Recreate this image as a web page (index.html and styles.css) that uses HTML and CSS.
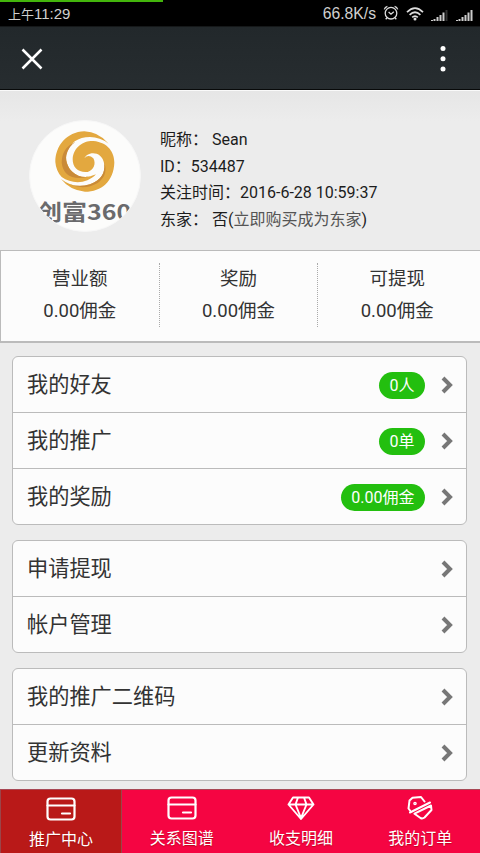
FILE: index.html
```html
<!DOCTYPE html>
<html lang="zh-CN">
<head>
<meta charset="utf-8">
<title>推广中心</title>
<link rel="stylesheet" href="styles.css">
</head>
<body>
<div class="screen">
  <div class="status">
    <i class="progress"></i>
    <span class="clock">上午<span class="time">11:29</span></span>
    <span class="speed">66.8K/s</span>
    <svg class="alarm" width="16" height="16" viewBox="0 0 16 16"><g fill="none" stroke="#ddd" stroke-width="1.3"><circle cx="8" cy="8.2" r="5.8"/><path d="M5.6 7l2.4 2.2L10.800 6.800M1.300 4.400Q2 2 4.400 1.300M11.600 1.300Q14 2 14.700 4.400M4 12.800l-1.300 1.500M12 12.800l1.300 1.500"/></g></svg>
    <svg class="wifi" width="18" height="14" viewBox="0 0 18 14"><g fill="none" stroke="#ddd" stroke-width="1.7"><path d="M1 5.200Q9-2.800 17 5.200M3.600 7.900Q9 2.600 14.400 7.900M6.200 10.400Q9 7.700 11.800 10.400"/></g><circle cx="9" cy="12" r="1.500" fill="#ddd"/></svg>
    <svg class="signal" width="17" height="12" viewBox="0 0 17 12"><path d="M0 11h2v1H0zM2.500 10h2v2h-2zM5.500 8h2v4h-2zM8.500 6h2v6h-2zM11.500 3.500h2V12h-2z" fill="#ccc"/><path d="M14.500 1h2v11h-2z" fill="#333"/></svg>
    <svg class="signal" width="17" height="12" viewBox="0 0 17 12"><path d="M0 11h2v1H0zM2.500 10h2v2h-2zM5.500 8h2v4h-2zM8.500 6h2v6h-2zM11.500 3.500h2V12h-2zM14.500 1h2v11h-2z" fill="#ccc"/></svg>
  </div>
  <header class="bar">
    <svg width="22" height="22" viewBox="0 0 22 22"><path d="M1.500 1.500l19 19M20.500 1.500l-19 19" stroke="#fff" stroke-width="2.500"/></svg>
    <svg width="6" height="28" viewBox="0 0 6 28"><g fill="#fff"><circle cx="3" cy="3.500" r="2.500"/><circle cx="3" cy="13.700" r="2.500"/><circle cx="3" cy="24" r="2.500"/></g></svg>
  </header>
  <section class="profile">
    <div class="avatar">
      <svg class="swirl" width="60" height="62" viewBox="0 0 180 186"><path d="M161 38Q130 2 88 1C35 3 1 45 1 93Q3 120 20 138C50 160 95 160 123 130Q95 143 70 134C40 122 30 90 34 72C42 35 70 18 105 18Q135 18 161 38z" fill="#e3a83f"/><path d="M62 32Q20 50 20 95C24 135 60 155 123 130Q95 143 70 134C40 122 30 90 34 72Q40 46 62 32z" fill="#c98a38"/><path d="M88 82Q100 68 115 82C124 98 116 118 98 123C70 126 53 110 53 85C55 45 90 28 115 30C160 34 178 65 178 95C176 150 140 182 90 182Q45 178 18 144Q60 176 105 160C140 148 150 125 148 100C143 70 122 64 105 68Q92 72 88 82z" fill="#e3a83f"/><path d="M105 160C140 148 150 125 148 100Q148 94 145 88Q164 130 128 156Q85 180 40 158Q70 170 105 160z" fill="#c98a38"/></svg>
      <div class="brand"><span>创富360</span></div>
    </div>
    <div class="info">
      <div>昵称：<span class="gap">Sean</span></div>
      <div>ID：534487</div>
      <div>关注时间：2016-6-28 10:59:37</div>
      <div>东家：<span class="gap">否(<a>立即购买成为东家</a>)</span></div>
    </div>
  </section>
  <section class="stats">
    <div class="stat">营业额<br>0.00佣金</div>
    <div class="stat">奖励<br>0.00佣金</div>
    <div class="stat">可提现<br>0.00佣金</div>
  </section>
  <main>
    <div class="group">
      <div class="row"><span>我的好友</span><b class="badge">0人</b><svg class="chev" width="12" height="18" viewBox="0 0 12 18"><path d="M2 2l7 7-7 7"/></svg></div>
      <div class="row"><span>我的推广</span><b class="badge">0单</b><svg class="chev" width="12" height="18" viewBox="0 0 12 18"><path d="M2 2l7 7-7 7"/></svg></div>
      <div class="row"><span>我的奖励</span><b class="badge">0.00佣金</b><svg class="chev" width="12" height="18" viewBox="0 0 12 18"><path d="M2 2l7 7-7 7"/></svg></div>
    </div>
    <div class="group">
      <div class="row"><span>申请提现</span><svg class="chev" width="12" height="18" viewBox="0 0 12 18"><path d="M2 2l7 7-7 7"/></svg></div>
      <div class="row"><span>帐户管理</span><svg class="chev" width="12" height="18" viewBox="0 0 12 18"><path d="M2 2l7 7-7 7"/></svg></div>
    </div>
    <div class="group">
      <div class="row"><span>我的推广二维码</span><svg class="chev" width="12" height="18" viewBox="0 0 12 18"><path d="M2 2l7 7-7 7"/></svg></div>
      <div class="row"><span>更新资料</span><svg class="chev" width="12" height="18" viewBox="0 0 12 18"><path d="M2 2l7 7-7 7"/></svg></div>
    </div>
  </main>
  <nav class="tabs">
    <div class="tab active"><svg width="30" height="24" viewBox="0 0 30 24"><rect x="1.500" y="1.500" width="27" height="21" rx="3"/><path d="M1.500 8.500h27M16 16.500h8"/></svg><span>推广中心</span></div>
    <div class="tab"><svg width="30" height="24" viewBox="0 0 30 24"><rect x="1.500" y="1.500" width="27" height="21" rx="3"/><path d="M1.500 8.500h27M16 16.500h8"/></svg><span>关系图谱</span></div>
    <div class="tab"><svg width="30" height="24" viewBox="0 0 30 24"><path stroke-width="1.900" d="M7 1.500h16l4.500 7L15 23 2.500 8.500zM2.500 8.500h25M9.500 8.500L15 22l5.500-13.500L18 1.500M9.500 8.500l2.500-7"/></svg><span>收支明细</span></div>
    <div class="tab"><svg width="30" height="24" viewBox="0 0 30 24"><path stroke-width="2" d="M5 14.500L3.500 12.500 4.500 4.500 7.500 1.800 16 1l3.500 4.500M5 16.500L25 6.500M9.500 17.700L26 9.500l.5 4.500-7 7.500q-2 1.500-4 .5z"/><circle cx="10" cy="7.500" r=".7"/></svg><span>我的订单</span></div>
  </nav>
</div>
</body>
</html>
```
FILE: styles.css
```css
* { box-sizing: border-box; }
body { margin: 0; font-family: Roboto, "Noto Sans CJK SC", sans-serif; color: #333; }
.screen { width: 480px; height: 853px; overflow: hidden; display: flex; flex-direction: column; background: #ececec; }
.status { position: relative; flex: none; height: 26px; padding: 2px 7px 0 8px; background: #000; color: #d0d0d0; display: flex; align-items: center; font: 15px/22px "Liberation Sans", "Noto Sans CJK SC", sans-serif; }
.progress { position: absolute; left: 0; top: 0; width: 163px; height: 2px; background: #43b50c; }
.clock { flex: 1; font-size: 13px; }
.time { font-size: 15px; }
.speed { font-size: 15.700px; margin-right: 7px; }
.alarm { margin-right: 7px; margin-top: -3px; }
.wifi { margin-right: 7px; }
.signal { margin-top: 1px; }
.signal + .signal { margin-left: 8px; }
.bar { flex: none; height: 64px; padding: 1px 34px 0 21px; display: flex; justify-content: space-between; align-items: center; background: linear-gradient(#22282b, #272d30); border-top: 1px solid #151819; border-bottom: 1px solid #080a0a; }
.profile { flex: none; height: 160px; padding: 29px 0 0 29px; display: flex; background: linear-gradient(#e6e6e6, #ececec 30px); border-top: 1px solid #fafafa; }
.avatar { flex: none; width: 112px; height: 112px; border-radius: 50%; background: #fcfcfb; border: 1px solid #f7f7f7; overflow: hidden; display: flex; flex-direction: column; align-items: center; padding-top: 10px; }
.swirl { flex: none; }
.brand { width: 92px; height: 24px; overflow: hidden; margin-top: 6px; font: bold 25px/24px "Noto Sans CJK SC", sans-serif; color: #6a6a6c; white-space: nowrap; }
.brand span { display: block; margin-left: -2px; transform: scaleY(.85); }
.info { margin-left: 19px; padding-top: 7px; font-size: 16px; line-height: 26.700px; color: #1c1c1c; white-space: nowrap; }
.gap { margin-left: 4px; }
.info a { color: #555; }
.stats { flex: none; height: 93px; border: 1px solid #bbb; border-right: 0; border-bottom-width: 2px; background: #fcfcfc; display: flex; padding: 12px 4px 14px 0; }
.stat { flex: 1; text-align: center; font-size: 18.500px; line-height: 32px; border-right: 1px dotted #aaa; }
.stat:last-child { border-right: 0; }
main { flex: 1; min-height: 0; padding: 13px 13px 0 12px; display: flex; flex-direction: column; gap: 15px; }
.group { flex: none; border: 1px solid #bbb; border-radius: 6px; background: #fcfcfc; }
.row { height: 55px; display: flex; align-items: center; padding: 0 13px 0 14px; font-size: 21.200px; line-height: 30px; }
.row + .row { height: 56px; border-top: 1px solid #bbb; }
.row span { flex: 1; }
.badge { height: 27px; border-radius: 14px; padding: 0 10.500px; background: #23bf0f; color: #fff; font-size: 16px; line-height: 27px; font-weight: 400; margin: 1px 16px 0 0; }
.chev { fill: none; stroke: #777; stroke-width: 4; }
.tabs { flex: none; height: 64px; border-top: 1px solid #a84855; display: flex; background: #f50542; color: #fff; }
.tab { flex: 1; display: flex; flex-direction: column; align-items: center; padding-top: 6px; font-size: 16px; line-height: 24px; text-shadow: 0 1px 1px #8008; }
.tab span { margin-top: 7px; }
.tab svg { fill: none; stroke: #fff; stroke-width: 2.200; stroke-linejoin: round; stroke-linecap: round; }
.active { flex: 0 0 122px; background: #b91918; border: solid #9b4549; border-width: 0 1px; padding-top: 7px; }
```
